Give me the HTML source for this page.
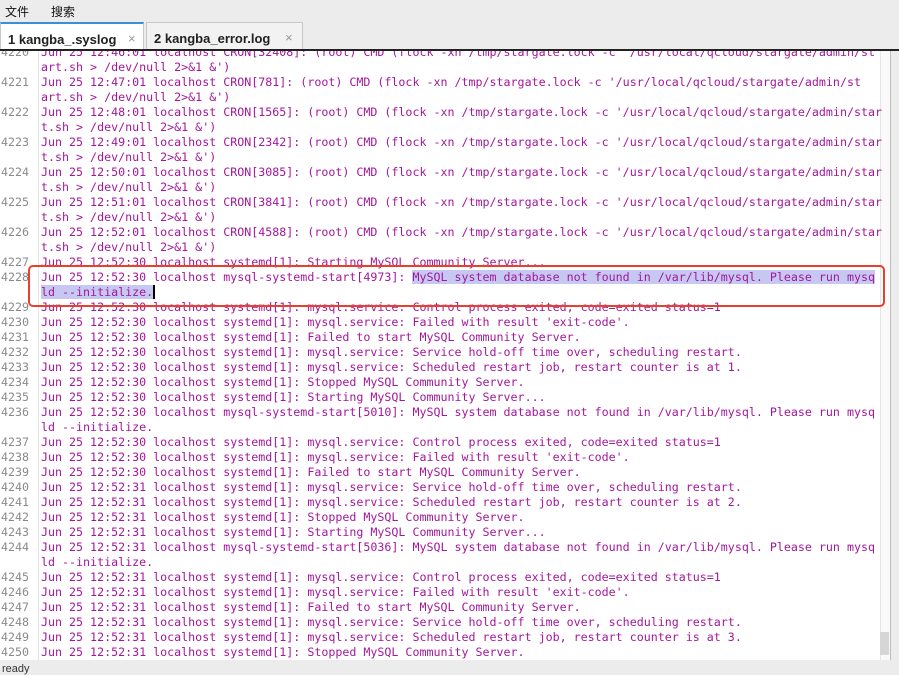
<!DOCTYPE html>
<html><head><meta charset="utf-8"><style>
*{margin:0;padding:0;box-sizing:border-box}
body{width:899px;height:670px;overflow:hidden;background:#ececec;font-family:"Liberation Sans","Noto Sans CJK SC",sans-serif;position:relative}
.menu{position:absolute;top:0;left:0;width:899px;height:21px;background:#ececec;font-size:12px;color:#111}
.menu span{position:absolute;top:3px}
.tab{position:absolute;top:22px;height:27px;font-size:13px;font-weight:bold;color:#222;padding:8px 0 0 7px;border:1px solid #c8c8c8;border-bottom:none}
.tab .x{position:absolute;top:7px;font-weight:normal;color:#999;font-size:13px}
.dark{position:absolute;top:49px;left:0;width:899px;height:2px;background:#222}
.editor{position:absolute;top:51px;left:0;width:891px;height:609px;background:#fff;overflow:hidden;border-right:1px solid #bbb}
.row{position:absolute;left:0;height:15px;width:880px;font-family:"DejaVu Sans Mono","Liberation Mono",monospace;font-size:11.65px;line-height:15px;white-space:pre}
.n{position:absolute;left:0;width:29px;text-align:right;color:#8a8a8a}
.t{position:absolute;left:41px;color:#a3179c}
.sel{background:#c6c8f2}
.sep{position:absolute;left:38px;top:0;width:1px;height:609px;background:#e4e4e4}
.box{position:absolute;left:28px;top:214px;width:857px;height:42px;border:2px solid #e8402c;border-radius:5px}
.sb{position:absolute;left:880px;top:0;width:10px;height:609px;background:#fafafa;border-left:1px solid #e6e6e6}
.thumb{position:absolute;left:880px;top:581px;width:9px;height:23px;background:#d6d6d6}
.status{position:absolute;top:660px;left:0;width:899px;height:10px;background:#ececec;font-size:11px;color:#333}
</style></head><body>
<div class="menu"><span style="left:5px">文件</span><span style="left:51px">搜索</span></div>
<div class="tab" style="left:0;width:144px;background:#fff;border-top:2px solid #3b8fd9">1 kangba_.syslog<span class="x" style="left:127px">×</span></div>
<div class="tab" style="left:146px;width:157px;background:#f2f2f2">2 kangba_error.log<span class="x" style="left:138px">×</span></div>
<div class="dark"></div>
<div class="editor">
<div class="sep"></div>
<div class="sb"></div>
<div class="thumb"></div>
<div class="row" style="top:-6px"><span class="n">4220</span><span class="t">Jun 25 12:46:01 localhost CRON[32408]: (root) CMD (flock -xn /tmp/stargate.lock -c '/usr/local/qcloud/stargate/admin/st</span></div>
<div class="row" style="top:9px"><span class="t">art.sh &gt; /dev/null 2&gt;&amp;1 &amp;')</span></div>
<div class="row" style="top:24px"><span class="n">4221</span><span class="t">Jun 25 12:47:01 localhost CRON[781]: (root) CMD (flock -xn /tmp/stargate.lock -c '/usr/local/qcloud/stargate/admin/st</span></div>
<div class="row" style="top:39px"><span class="t">art.sh &gt; /dev/null 2&gt;&amp;1 &amp;')</span></div>
<div class="row" style="top:54px"><span class="n">4222</span><span class="t">Jun 25 12:48:01 localhost CRON[1565]: (root) CMD (flock -xn /tmp/stargate.lock -c '/usr/local/qcloud/stargate/admin/star</span></div>
<div class="row" style="top:69px"><span class="t">t.sh &gt; /dev/null 2&gt;&amp;1 &amp;')</span></div>
<div class="row" style="top:84px"><span class="n">4223</span><span class="t">Jun 25 12:49:01 localhost CRON[2342]: (root) CMD (flock -xn /tmp/stargate.lock -c '/usr/local/qcloud/stargate/admin/star</span></div>
<div class="row" style="top:99px"><span class="t">t.sh &gt; /dev/null 2&gt;&amp;1 &amp;')</span></div>
<div class="row" style="top:114px"><span class="n">4224</span><span class="t">Jun 25 12:50:01 localhost CRON[3085]: (root) CMD (flock -xn /tmp/stargate.lock -c '/usr/local/qcloud/stargate/admin/star</span></div>
<div class="row" style="top:129px"><span class="t">t.sh &gt; /dev/null 2&gt;&amp;1 &amp;')</span></div>
<div class="row" style="top:144px"><span class="n">4225</span><span class="t">Jun 25 12:51:01 localhost CRON[3841]: (root) CMD (flock -xn /tmp/stargate.lock -c '/usr/local/qcloud/stargate/admin/star</span></div>
<div class="row" style="top:159px"><span class="t">t.sh &gt; /dev/null 2&gt;&amp;1 &amp;')</span></div>
<div class="row" style="top:174px"><span class="n">4226</span><span class="t">Jun 25 12:52:01 localhost CRON[4588]: (root) CMD (flock -xn /tmp/stargate.lock -c '/usr/local/qcloud/stargate/admin/star</span></div>
<div class="row" style="top:189px"><span class="t">t.sh &gt; /dev/null 2&gt;&amp;1 &amp;')</span></div>
<div class="row" style="top:204px"><span class="n">4227</span><span class="t">Jun 25 12:52:30 localhost systemd[1]: Starting MySQL Community Server...</span></div>
<div class="row" style="top:219px"><span class="n">4228</span><span class="t">Jun 25 12:52:30 localhost mysql-systemd-start[4973]: <span class="sel">MySQL system database not found in /var/lib/mysql. Please run mysq</span></span></div>
<div class="row" style="top:234px"><span class="t"><span class="sel">ld --initialize.</span><span style="border-left:2px solid #000"></span></span></div>
<div class="row" style="top:249px"><span class="n">4229</span><span class="t">Jun 25 12:52:30 localhost systemd[1]: mysql.service: Control process exited, code=exited status=1</span></div>
<div class="row" style="top:264px"><span class="n">4230</span><span class="t">Jun 25 12:52:30 localhost systemd[1]: mysql.service: Failed with result 'exit-code'.</span></div>
<div class="row" style="top:279px"><span class="n">4231</span><span class="t">Jun 25 12:52:30 localhost systemd[1]: Failed to start MySQL Community Server.</span></div>
<div class="row" style="top:294px"><span class="n">4232</span><span class="t">Jun 25 12:52:30 localhost systemd[1]: mysql.service: Service hold-off time over, scheduling restart.</span></div>
<div class="row" style="top:309px"><span class="n">4233</span><span class="t">Jun 25 12:52:30 localhost systemd[1]: mysql.service: Scheduled restart job, restart counter is at 1.</span></div>
<div class="row" style="top:324px"><span class="n">4234</span><span class="t">Jun 25 12:52:30 localhost systemd[1]: Stopped MySQL Community Server.</span></div>
<div class="row" style="top:339px"><span class="n">4235</span><span class="t">Jun 25 12:52:30 localhost systemd[1]: Starting MySQL Community Server...</span></div>
<div class="row" style="top:354px"><span class="n">4236</span><span class="t">Jun 25 12:52:30 localhost mysql-systemd-start[5010]: MySQL system database not found in /var/lib/mysql. Please run mysq</span></div>
<div class="row" style="top:369px"><span class="t">ld --initialize.</span></div>
<div class="row" style="top:384px"><span class="n">4237</span><span class="t">Jun 25 12:52:30 localhost systemd[1]: mysql.service: Control process exited, code=exited status=1</span></div>
<div class="row" style="top:399px"><span class="n">4238</span><span class="t">Jun 25 12:52:30 localhost systemd[1]: mysql.service: Failed with result 'exit-code'.</span></div>
<div class="row" style="top:414px"><span class="n">4239</span><span class="t">Jun 25 12:52:30 localhost systemd[1]: Failed to start MySQL Community Server.</span></div>
<div class="row" style="top:429px"><span class="n">4240</span><span class="t">Jun 25 12:52:31 localhost systemd[1]: mysql.service: Service hold-off time over, scheduling restart.</span></div>
<div class="row" style="top:444px"><span class="n">4241</span><span class="t">Jun 25 12:52:31 localhost systemd[1]: mysql.service: Scheduled restart job, restart counter is at 2.</span></div>
<div class="row" style="top:459px"><span class="n">4242</span><span class="t">Jun 25 12:52:31 localhost systemd[1]: Stopped MySQL Community Server.</span></div>
<div class="row" style="top:474px"><span class="n">4243</span><span class="t">Jun 25 12:52:31 localhost systemd[1]: Starting MySQL Community Server...</span></div>
<div class="row" style="top:489px"><span class="n">4244</span><span class="t">Jun 25 12:52:31 localhost mysql-systemd-start[5036]: MySQL system database not found in /var/lib/mysql. Please run mysq</span></div>
<div class="row" style="top:504px"><span class="t">ld --initialize.</span></div>
<div class="row" style="top:519px"><span class="n">4245</span><span class="t">Jun 25 12:52:31 localhost systemd[1]: mysql.service: Control process exited, code=exited status=1</span></div>
<div class="row" style="top:534px"><span class="n">4246</span><span class="t">Jun 25 12:52:31 localhost systemd[1]: mysql.service: Failed with result 'exit-code'.</span></div>
<div class="row" style="top:549px"><span class="n">4247</span><span class="t">Jun 25 12:52:31 localhost systemd[1]: Failed to start MySQL Community Server.</span></div>
<div class="row" style="top:564px"><span class="n">4248</span><span class="t">Jun 25 12:52:31 localhost systemd[1]: mysql.service: Service hold-off time over, scheduling restart.</span></div>
<div class="row" style="top:579px"><span class="n">4249</span><span class="t">Jun 25 12:52:31 localhost systemd[1]: mysql.service: Scheduled restart job, restart counter is at 3.</span></div>
<div class="row" style="top:594px"><span class="n">4250</span><span class="t">Jun 25 12:52:31 localhost systemd[1]: Stopped MySQL Community Server.</span></div>
<div class="box"></div>
</div>
<div class="status"><span style="position:absolute;left:2px;top:3px">ready</span></div>
</body></html>
